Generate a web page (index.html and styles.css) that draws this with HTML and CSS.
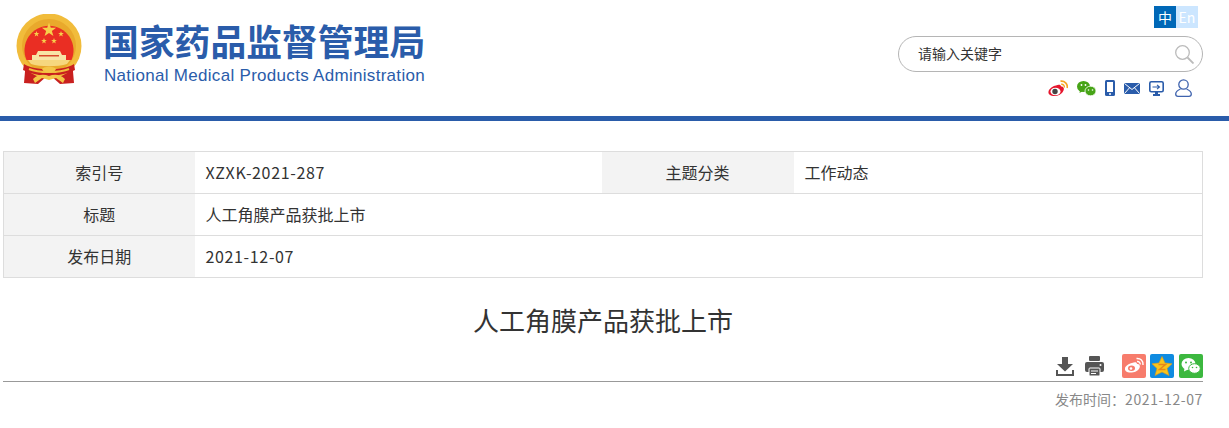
FILE: index.html
```html
<!DOCTYPE html>
<html lang="zh-CN">
<head>
    <meta charset="UTF-8">
    <title>人工角膜产品获批上市</title>
    <link rel="stylesheet" href="styles.css">
</head>
<body>
    <header class="header">
        <div class="brand">
            <svg class="emblem" width="66" height="71" viewBox="0 0 66 71">
                <defs>
                    <path id="star" d="M0 -1 L0.24 -0.31 L0.95 -0.31 L0.38 0.12 L0.59 0.81 L0 0.4 L-0.59 0.81 L-0.38 0.12 L-0.95 -0.31 L-0.24 -0.31 Z"/>
                </defs>
                <path d="M10 46 L8 69 L22 70 L31 62 L35 62 L44 70 L58 69 L56 46 Z" fill="#c9201f"/>
                <circle cx="33" cy="32" r="32.500" fill="#f1bc3b"/>
                <circle cx="33" cy="32" r="27" fill="#e9a92c"/>
                <path d="M10.500 46 A24.500 24.500 0 1 1 55.500 46 Z" fill="#ea2e23"/>
                <use href="#star" transform="translate(33 16) scale(7.500)" fill="#f7cf4a"/>
                <use href="#star" transform="translate(20.500 20) scale(3)" fill="#f7cf4a"/>
                <use href="#star" transform="translate(45 20) scale(3)" fill="#f7cf4a"/>
                <use href="#star" transform="translate(28 27) scale(3)" fill="#f7cf4a"/>
                <use href="#star" transform="translate(38 27) scale(3)" fill="#f7cf4a"/>
                <path d="M22 37 H44 L46 41 H50 V46 H16 V41 H20 Z" fill="#f8e3a6"/>
                <path d="M23 41 H43 V42.500 H23 Z" fill="#d9482c"/>
                <path d="M12 46 H54 L51 50 C42 53 24 53 15 50 Z" fill="#f6d77e"/>
                <path d="M8 50 C18 57 48 57 58 50 L59 56 C50 60 40 62 33 62 C26 62 16 60 7 56 Z" fill="#c9201f"/>
                <path d="M13 55 C22 59 44 59 53 55" fill="none" stroke="#f1bc3b" stroke-width="2"/>
                <path d="M26 55 C28 52 38 52 40 55 C38 60 28 60 26 55 Z" fill="#f4c648"/>
                <path d="M17 65 C22 60 28 60 33 62 C38 60 44 60 49 65 L47 69 L40 64 L33 66 L26 64 L19 69 Z" fill="#f4c648"/>
            </svg>
            <div class="brand-text">
                <div class="brand-cn">国家药品监督管理局</div>
                <div class="brand-en">National Medical Products Administration</div>
            </div>
        </div>
        <div class="tools">
            <div class="lang">
                <a class="lang-item lang-on">中</a>
                <a class="lang-item lang-off">En</a>
            </div>
            <div class="search">
                <span class="search-text">请输入关键字</span>
                <svg width="19" height="19" viewBox="0 0 19 19" fill="none" stroke="#bbb" stroke-width="1.300">
                    <circle cx="7.500" cy="7.500" r="6.800"/>
                    <path d="M12.500 12.500 L18.500 18.500" stroke-width="1.800"/>
                </svg>
            </div>
            <div class="links">
                <svg class="l-weibo" width="20" height="17" viewBox="0 0 20 17">
                    <path d="M8 5.500 C10.500 4 13 4.500 13 6.500 C15.500 6.500 16.500 8.500 15.500 10.500 C14 14.500 9 16.500 5 16 C2 15.500 0 14 0.500 11.500 C1 9 4.500 6 8 5.500 Z" fill="#e6162d"/>
                    <ellipse cx="7.500" cy="11.500" rx="5" ry="3.800" fill="#fff"/>
                    <circle cx="7" cy="11.500" r="2.700" fill="#444"/>
                    <path d="M12.500 1.200 C16.500 0.500 20 4 19.200 8" fill="none" stroke="#f5a623" stroke-width="1.700"/>
                    <path d="M13.200 4.300 C15 4 16.700 5.600 16.300 7.500" fill="none" stroke="#f5a623" stroke-width="1.400"/>
                </svg>
                <svg class="l-wechat" width="19" height="15" viewBox="0 0 19 15">
                    <ellipse cx="6.500" cy="5.500" rx="6.500" ry="5.500" fill="#47a417"/>
                    <path d="M3 9 L2.500 12 L6 10 Z" fill="#47a417"/>
                    <ellipse cx="13.500" cy="10" rx="5.500" ry="4.800" fill="#47a417" stroke="#fff" stroke-width="0.800"/>
                    <circle cx="4.500" cy="4" r="0.900" fill="#fff"/>
                    <circle cx="8.500" cy="4" r="0.900" fill="#fff"/>
                    <circle cx="11.500" cy="9" r="0.800" fill="#fff"/>
                    <circle cx="15.500" cy="9" r="0.800" fill="#fff"/>
                </svg>
                <svg class="l-phone" width="10" height="16" viewBox="0 0 10 16">
                    <rect x="0" y="0" width="10" height="16" rx="1.500" fill="#2a5caa"/>
                    <rect x="2" y="2" width="6" height="10" fill="#fff"/>
                    <circle cx="5" cy="14" r="1" fill="#fff"/>
                </svg>
                <svg class="l-mail" width="16" height="11" viewBox="0 0 16 11">
                    <rect width="16" height="11" rx="1" fill="#2a5caa"/>
                    <path d="M0.500 0.500 L8 6.500 L15.500 0.500 M0.500 10.500 L5.500 4.800 M15.500 10.500 L10.500 4.800" fill="none" stroke="#fff" stroke-width="1"/>
                </svg>
                <svg class="l-screen" width="15" height="15" viewBox="0 0 15 15">
                    <rect x="0.800" y="0.800" width="13.400" height="10" rx="1.500" fill="none" stroke="#2a5caa" stroke-width="1.600"/>
                    <path d="M3.500 6 H10 M8 3.800 L10.500 6 L8 8.200" fill="none" stroke="#2a5caa" stroke-width="1.100"/>
                    <path d="M6 11 H9 V13 H11 V15 H4 V13 H6 Z" fill="#2a5caa"/>
                </svg>
                <svg class="l-user" width="17" height="18" viewBox="0 0 17 18" fill="none" stroke="#3f63ae" stroke-width="1.300">
                    <circle cx="8.500" cy="5.500" r="4.700"/>
                    <path d="M5.500 10 C3 11 0.700 13 0.700 15 C0.700 16.500 1.500 17.300 3 17.300 H14 C15.500 17.300 16.300 16.500 16.300 15 C16.300 13 14 11 11.500 10"/>
                </svg>
            </div>
        </div>
    </header>
    <div class="rule"></div>

    <main class="content">
        <table class="info">
            <colgroup>
                <col class="col-first">
                <col class="col-value">
                <col class="col-label">
                <col class="col-rest">
            </colgroup>
            <tr>
                <th>索引号</th>
                <td class="num">XZXK-2021-287</td>
                <th>主题分类</th>
                <td>工作动态</td>
            </tr>
            <tr>
                <th>标题</th>
                <td colspan="3">人工角膜产品获批上市</td>
            </tr>
            <tr>
                <th>发布日期</th>
                <td class="num" colspan="3">2021-12-07</td>
            </tr>
        </table>

        <h1 class="title">人工角膜产品获批上市</h1>

        <div class="actions">
            <svg class="a-down" width="18" height="19" viewBox="0 0 18 19">
                <path d="M6 0 H12 V7 H17 L9 14.500 L1 7 H6 Z" fill="#555"/>
                <path d="M1 13 V18 H17 V13" fill="none" stroke="#555" stroke-width="2"/>
            </svg>
            <svg class="a-print" width="19" height="20" viewBox="0 0 19 20">
                <rect x="4" y="0" width="11" height="5" rx="1" fill="#555"/>
                <rect x="0" y="6" width="19" height="10" rx="2" fill="#555"/>
                <rect x="4" y="12" width="11" height="8" rx="1" fill="#555" stroke="#fff"/>
                <path d="M6 15 H13 M6 17.500 H11" stroke="#fff"/>
                <circle cx="15.500" cy="9" r="1" fill="#fff"/>
            </svg>
            <svg class="a-weibo" width="24" height="24" viewBox="0 0 24 24">
                <rect width="24" height="24" rx="2" fill="#f77c6c"/>
                <path d="M10 9 C13 7.500 15 8 15 10 C17.500 10 18.500 12 17.500 14 C16 17.500 11 19 7 18.500 C4 18 2.500 16.500 3 14 C3.500 12 7 9.500 10 9 Z" fill="#fff"/>
                <ellipse cx="9.500" cy="14.300" rx="3.500" ry="2.700" fill="#f77c6c"/>
                <circle cx="9" cy="14.500" r="1.300" fill="#fff"/>
                <path d="M14.500 4.500 C18.500 4 21.500 7 21 11 M15 7.500 C17 7.300 18.300 8.500 18.200 10.500" fill="none" stroke="#fff" stroke-width="1.400"/>
            </svg>
            <svg class="a-qzone" width="24" height="24" viewBox="0 0 24 24">
                <rect width="24" height="24" rx="2" fill="#0f8be0"/>
                <path d="M12 2.500 L15 9 L22 9.800 L17 14.500 L19 21.500 L12 18 L5 21.500 L7 14.500 L2 9.800 L9 9 Z" fill="#f8c51c" stroke="#e89a10" stroke-width="0.600"/>
                <path d="M8.500 10.500 H15.500 L9.500 15.500 H15.500" fill="none" stroke="#e8861a" stroke-width="1.500"/>
            </svg>
            <svg class="a-wechat" width="24" height="24" viewBox="0 0 24 24">
                <rect width="24" height="24" rx="2" fill="#3cb83f"/>
                <ellipse cx="9.500" cy="10" rx="7" ry="6" fill="#fff"/>
                <path d="M5.500 14 L5 17.500 L9 15.500 Z" fill="#fff"/>
                <ellipse cx="15.500" cy="14.500" rx="5.800" ry="4.800" fill="#fff" stroke="#3cb83f"/>
                <circle cx="7" cy="8.500" r="1" fill="#3cb83f"/>
                <circle cx="12" cy="8.500" r="1" fill="#3cb83f"/>
                <circle cx="13.500" cy="13.500" r="0.800" fill="#3cb83f"/>
                <circle cx="17.500" cy="13.500" r="0.800" fill="#3cb83f"/>
            </svg>
        </div>
        <div class="meta">发布时间：<span class="meta-date">2021-12-07</span></div>
    </main>
</body>
</html>
```
FILE: styles.css
```css
body {
    margin: 0;
    background: #fff;
    font-family: "Noto Sans CJK SC", "Liberation Sans", sans-serif;
    color: #333;
    overflow: hidden;
}

svg {
    display: block;
    flex: none;
}

.header {
    display: flex;
    justify-content: space-between;
    height: 116px;
    padding: 0 26px 0 16px;
}

.brand {
    display: flex;
    align-items: flex-start;
    padding-top: 14px;
}

.brand-text {
    margin-left: 22px;
    margin-top: 4px;
    color: #2a5caa;
}

.brand-cn {
    font-size: 35.800px;
    font-weight: 700;
    line-height: 44px;
    margin-left: -1px;
}

.brand-en {
    font-family: "Liberation Sans", sans-serif;
    font-size: 17px;
    line-height: 20px;
    letter-spacing: 0.3px;
    margin-top: 4px;
}

.tools {
    display: flex;
    flex-direction: column;
    align-items: flex-end;
    width: 305px;
    padding-top: 6px;
}

.lang {
    display: flex;
    margin-right: 5px;
}

.lang-item {
    width: 22px;
    height: 22px;
    line-height: 22px;
    text-align: center;
    font-size: 14px;
    color: #fff;
}

.lang-on {
    background: #0068b7;
}

.lang-off {
    background: #cce6ff;
}

.search {
    display: flex;
    align-items: center;
    justify-content: space-between;
    box-sizing: border-box;
    width: 305px;
    height: 36px;
    margin-top: 8px;
    padding: 0 8px 0 19px;
    border: 1px solid #b5b5b5;
    border-radius: 18px;
    font-size: 14px;
}

.search-text {
    margin-bottom: 2px;
}

.links {
    display: flex;
    align-items: center;
    height: 18px;
    margin-top: 7px;
    margin-right: 11px;
}

.l-wechat { margin-left: 9px; }
.l-phone { margin-left: 9px; }
.l-mail { margin-left: 9px; }
.l-screen { margin-left: 9px; }
.l-user { margin-left: 11px; }

.rule {
    height: 5px;
    background: #2a5caa;
}

.content {
    width: 1200px;
    margin-left: 3px;
    padding-top: 30px;
}

.info {
    width: 1199px;
    border-collapse: collapse;
    table-layout: fixed;
    font-size: 16px;
}

.col-first { width: 191px; }
.col-label { width: 192px; }
.col-value { width: 407px; }
.col-rest { width: 409px; }

.info th, .info td {
    height: 39px;
    padding: 0 0 2px;
    border-top: 1px solid #ddd;
    border-bottom: 1px solid #ddd;
    font-weight: 400;
    color: #333;
}

.info th {
    background: #f3f3f3;
}

.info td {
    padding-left: 11px;
}

.info tr > :first-child {
    border-left: 1px solid #ddd;
}

.info tr > :last-child {
    border-right: 1px solid #ddd;
}

.info .num {
    letter-spacing: 0.65px;
}

.title {
    margin: 25px 0 0;
    font-size: 26px;
    font-weight: 400;
    line-height: 34px;
    text-align: center;
    color: #333;
}

.actions {
    display: flex;
    align-items: center;
    justify-content: flex-end;
    height: 26px;
    margin-top: 16px;
    padding-bottom: 2px;
    border-bottom: 1px solid #999;
}

.a-print { margin-left: 11px; margin-right: 18px; }
.a-qzone { margin-left: 4px; }
.a-wechat { margin-left: 5px; }

.meta {
    margin-top: 7px;
    font-size: 14px;
    line-height: 20px;
    text-align: right;
    color: #888;
}

.meta-date {
    letter-spacing: 0.6px;
}
```
